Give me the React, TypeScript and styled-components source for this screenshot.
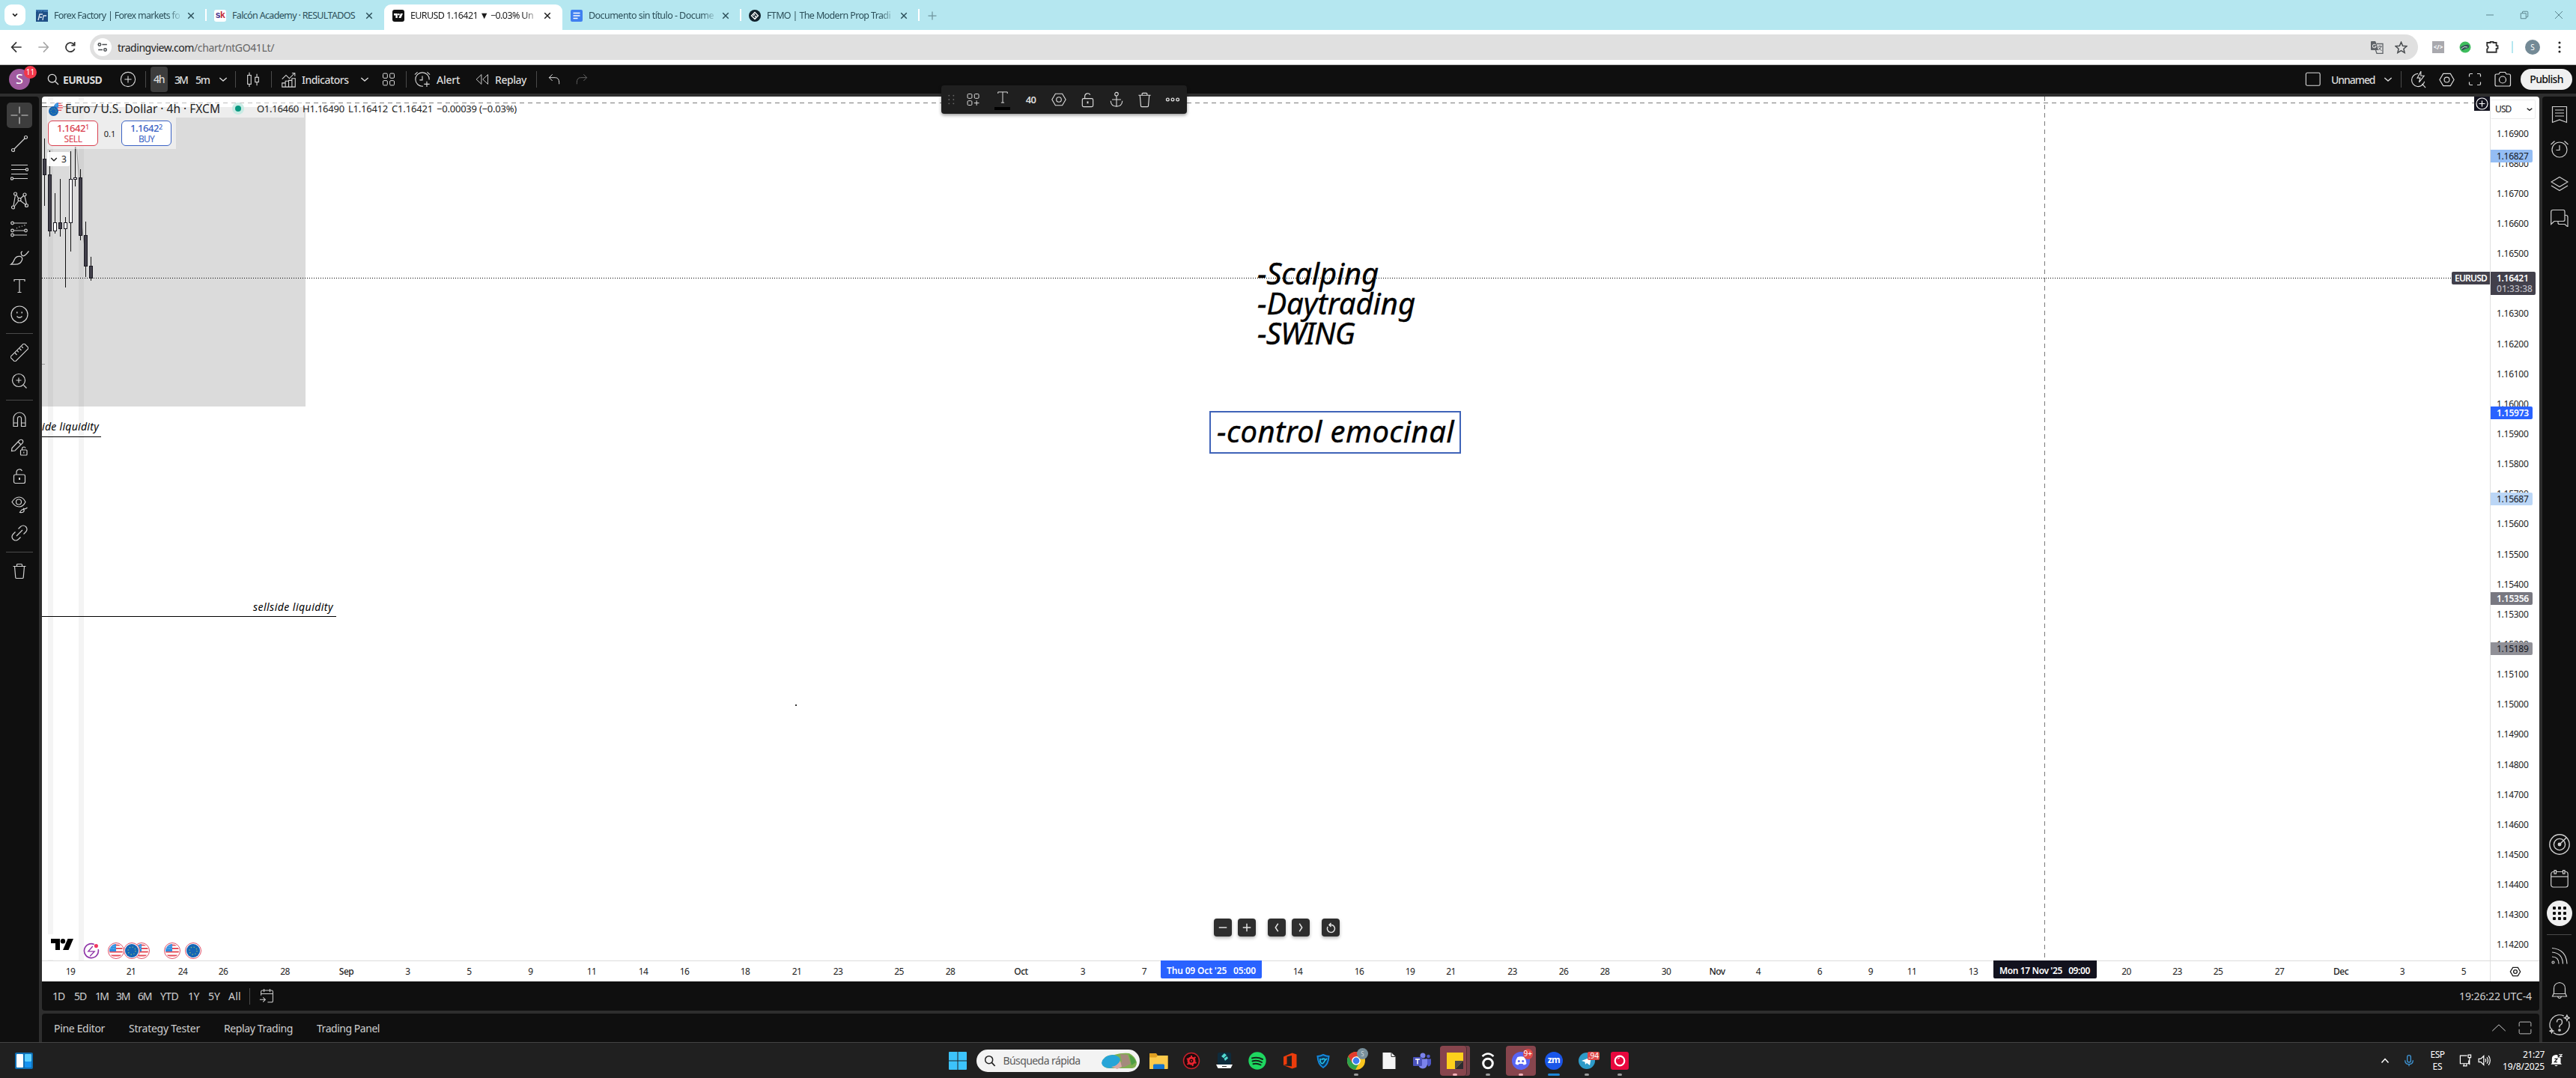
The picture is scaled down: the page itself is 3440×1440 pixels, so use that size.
import React, { useLayoutEffect, useRef } from "react";
import styled, { createGlobalStyle } from "styled-components";

const GlobalStyle = createGlobalStyle`
  * {
    box-sizing: border-box;
  }

  body {
    margin: 0;
    background: #2e2e2e;
    font-family: "Noto Sans", "Open Sans", sans-serif;
    overflow: hidden;
  }

  svg {
    display: block;
    flex: none;
  }
`;

/* ---------- helpers ---------- */

type FitProps = { width: number; children: string };

// spreads the letters of a label so that it takes exactly the given width
const Fit: React.FC<FitProps> = ({ width, children }) => {
  const ref = useRef<HTMLSpanElement>(null);

  useLayoutEffect(() => {
    const el = ref.current;
    if (!el) return;
    el.style.letterSpacing = "0";
    const natural = el.getBoundingClientRect().width;
    el.style.letterSpacing = `${(width - natural) / children.length}px`;
  }, [width, children]);

  return <FitText ref={ref}>{children}</FitText>;
};

type IconProps = {
  size?: number;
  stroke?: number;
  fill?: string;
  children: React.ReactNode;
};

const Icon: React.FC<IconProps> = ({ size = 24, stroke = 1.2, fill = "none", children }) => (
  <svg
    width={size}
    height={size}
    viewBox="0 0 24 24"
    fill={fill}
    stroke={stroke ? "currentColor" : "none"}
    strokeWidth={stroke}
  >
    {children}
  </svg>
);

/* ---------- icons ---------- */

const Chevron = () => (
  <Icon size={16}>
    <path d="M5 9l7 6 7-6" strokeWidth="2" />
  </Icon>
);

const HexIcon = ({ size = 24, stroke = 1.2 }: { size?: number; stroke?: number }) => (
  <Icon size={size} stroke={stroke}>
    <path d="M7 3.500h10l5 8.500-5 8.500H7L2 12z" />
    <circle cx="12" cy="12" r="3.600" />
  </Icon>
);

const LockIcon = ({ size = 24 }: { size?: number }) => (
  <Icon size={size}>
    <rect x="4.500" y="10" width="15" height="11.500" rx="2" />
    <path d="M8 10V6.500a4 4 0 0 1 7.500-1.500" />
    <path d="M12 14v3" strokeWidth="2" />
  </Icon>
);

const TrashIcon = ({ size = 24 }: { size?: number }) => (
  <Icon size={size}>
    <path d="M3.500 5.500h17M8.500 5.500V3.500q0-1 1-1h5q1 0 1 1v2M5.500 5.500l1.300 15q.1 1 1.200 1h8q1.100 0 1.200-1l1.300-15" />
  </Icon>
);

const FullscreenIcon = () => (
  <Icon>
    <path d="M4.500 8.500V6q0-1.500 1.500-1.500h3M15 4.500h3q1.500 0 1.500 1.500v2.500M19.500 15.500V18q0 1.500-1.500 1.500h-3M9 19.500H6q-1.500 0-1.500-1.500v-2.500" />
  </Icon>
);

const CrossIcon = () => (
  <Icon>
    <path d="M12 0.500v9M12 14.500v9M0.500 12h9M14.500 12h9" />
  </Icon>
);

const TrendIcon = () => (
  <Icon>
    <circle cx="3.500" cy="20.500" r="2" />
    <circle cx="20.500" cy="3.500" r="2" />
    <path d="M5 19L19 5" />
  </Icon>
);

const FibIcon = () => (
  <Icon>
    <path d="M1 2.500h22M1 8.500h19.500M4 20.500h19M1 14.500h22" />
    <circle cx="22" cy="8.500" r="1.700" />
    <circle cx="2" cy="20.500" r="1.700" />
  </Icon>
);

const PatternIcon = () => (
  <Icon>
    <path d="M4 19L6.500 4.500M8 4.500l3 5M5 20l6-8M13 9.500l4.500-4M19 6l2.500 11M13 12l8 6" />
    <circle cx="6.500" cy="3" r="2" />
    <circle cx="19" cy="4" r="2" />
    <circle cx="12" cy="10.500" r="2" />
    <circle cx="3.500" cy="21" r="2" />
    <circle cx="21.500" cy="18.500" r="2" />
  </Icon>
);

const ForecastIcon = () => (
  <Icon>
    <path d="M4 4h18M4 14h15M4 20h18" />
    <circle cx="2.500" cy="4" r="1.800" />
    <circle cx="2.500" cy="14" r="1.800" />
    <circle cx="20.500" cy="14" r="1.800" />
    <circle cx="2.500" cy="20" r="1.800" />
    <path d="M8 11l4-2 4-1 5-2" strokeDasharray="1.200 2.500" />
  </Icon>
);

const BrushIcon = () => (
  <Icon size={26}>
    <path d="M1.500 20.500q3-2 4-5.500 2-5 7-4.500 4 1 2.500 5-2 5-8 5zM14 5.500q0 4.500 3 4.500 3-1 6.500-6M14 5.500l1.500-1" />
  </Icon>
);

const TextIcon = () => (
  <Icon>
    <path d="M5 6V3.500h14V6M12 3.500v17M9.500 20.500h5" />
  </Icon>
);

const SmileIcon = () => (
  <Icon>
    <circle cx="12" cy="12" r="11" />
    <path d="M8 9.500h1.500M14.500 9.500H16" strokeWidth="2" />
    <path d="M8.500 14.500q3.500 3.500 7 0" />
  </Icon>
);

const RulerIcon = () => (
  <Icon>
    <rect x="-1" y="7.500" width="26" height="9" rx="1.500" transform="rotate(-45 12 12)" />
    <path d="M6.500 11l2.500 2.500M9.500 8l1.800 1.800M12.500 5l2.500 2.500M15.500 2.500l1.800 1.800" transform="translate(-.5 1.500)" />
  </Icon>
);

const ZoomInIcon = () => (
  <Icon>
    <circle cx="11" cy="11" r="8.500" />
    <path d="M17.500 17.500l4 4M11 7.500v7M7.500 11h7" />
  </Icon>
);

const MagnetIcon = () => (
  <Icon>
    <path d="M4 21.500V11a8 8 0 0 1 16 0v10.500h-5.500V11a2.500 2.500 0 0 0-5 0v10.500zM4 17h5.500M14.500 17H20" />
  </Icon>
);

const PencilLockIcon = () => (
  <Icon>
    <path d="M1.500 16.500l.5-4L12 2q2.500-1.500 4 0t0 4L6 16zM10 4l4 4" />
    <rect x="13.500" y="15" width="8.500" height="7" rx="1" />
    <path d="M15.500 15v-2q.5-2 2.500-2 1.500 0 2 1.500M17.800 17.500v2" />
  </Icon>
);

const EyeIcon = () => (
  <Icon>
    <path d="M2 8.500Q6 2 11.500 2T20 8.500Q17 15 11.500 15T2 8.500z" />
    <circle cx="11" cy="8.500" r="3.500" />
    <path d="M12.500 22.500q2-4 4.500-4 2.500 1 0 3.500-1.500 1-4.500.5zM17 17q2 2 5.500-1" />
  </Icon>
);

const LinkIcon = () => (
  <Icon>
    <path d="M8 16l8-8M10.500 6.500l3-3q3.500-3 7 0 3 3.500 0 7l-3 3M6.500 10.500l-3 3q-3 3.500 0 7 3.500 3 7 0l3-3" />
  </Icon>
);

const ListIcon = () => (
  <Icon>
    <path d="M2.500 1.500h19v21l-9.500-3.500-9.500 3.500zM6 6h12M6 10h12M6 14h12" />
  </Icon>
);

const AlarmIcon = () => (
  <Icon>
    <circle cx="12" cy="13" r="10" />
    <path d="M12 7v6.500H7.500M0.500 6l5-4.500M23.500 6l-5-4.500" />
  </Icon>
);

const LayersIcon = () => (
  <Icon>
    <path d="M12 3.500l11 6.500-11 6.500L1 10zM1 15l11 6.500L23 15" />
  </Icon>
);

const ChatIcon = () => (
  <Icon>
    <path d="M.7 20.500V4q0-2.500 2.500-2.500h14Q19 1.500 19 4v10.500q0 2-2 2H5z" />
    <path d="M19 8.500h1.500q2.500 0 2.500 2.500v13l-4-3.500h-7q-2 0-2-2v-2" />
  </Icon>
);

const RadarIcon = () => (
  <Icon size={28}>
    <circle cx="12" cy="12" r="11.300" />
    <circle cx="12" cy="12" r="6.500" />
    <circle cx="12" cy="12" r="1.500" fill="currentColor" />
    <path d="M12 12l8-8" />
  </Icon>
);

const CalendarIcon = () => (
  <Icon>
    <rect x="0.700" y="2.500" width="22.500" height="20.500" rx="3" />
    <path d="M1 9h22" />
    <rect x="5" y="0.600" width="2.500" height="4.500" fill="#0f0f0f" />
    <rect x="16.500" y="0.600" width="2.500" height="4.500" fill="#0f0f0f" />
  </Icon>
);

const RssIcon = () => (
  <Icon>
    <circle cx="3.500" cy="20.500" r="1.500" />
    <path d="M2 13q9 0 9 9.500M2 7q14 1 14.500 15.500M2 1.500Q21 3 22 22.500" />
  </Icon>
);

const BellIcon = () => (
  <Icon>
    <path d="M4.500 16.500V9.500q0-7 7.500-8 7.500 1 7.500 8v7M4 16.500h16l1.500 3.500h-19zM9.500 20.500q2.500 4 5 0" />
  </Icon>
);

const HelpIcon = () => (
  <Icon size={28}>
    <path d="M17 1.800A11.300 11.300 0 0 0 1.800 16.500M5 21A11.300 11.300 0 0 0 22.500 8" />
    <path d="M9 9q0-3.500 3-3.500T15 9q0 2-1.800 3t-1.200 3" />
    <circle cx="12" cy="18" r="1" />
    <path d="M20.500 1l.9 2.100L23.500 4l-2.100.9-.9 2.100-.9-2.100L17.500 4l2.100-.9zM3 17l.6 1.400L5 19l-1.400.6L3 21l-.6-1.400L1 19l1.400-.6z" />
  </Icon>
);

const Flag = ({ eu, size = 18 }: { eu?: boolean; size?: number }) => (
  <svg width={size} height={size} viewBox="0 0 18 18">
    <clipPath id="round">
      <circle cx="9" cy="9" r="9" />
    </clipPath>
    <g clipPath="url(#round)">
      {eu ? (
        <>
          <rect width="18" height="18" fill="#1565b5" />
          <circle cx="9" cy="9" r="5" fill="none" stroke="#8fc06a" strokeWidth="1.300" strokeDasharray="1.300 2.630" />
        </>
      ) : (
        <>
          <rect width="18" height="18" fill="#fff" />
          <path d="M0 1.500h18M0 6h18M0 10.500h18M0 15.500h18" stroke="#e5505c" strokeWidth="2.200" />
          <rect width="9" height="10" fill="#2c8de0" />
          <path d="M1 3h8M1 6h8" stroke="#b9dcf8" strokeWidth=".8" strokeDasharray="1 1" />
        </>
      )}
    </g>
  </svg>
);

const TvLogo = ({ size = 30, color = "#000" }: { size?: number; color?: string }) => (
  <svg width={size} height={size / 2} viewBox="0 0 30 15" fill={color}>
    <path d="M0 0h12v15H6V6H0z" />
    <circle cx="16" cy="3.200" r="3.200" />
    <path d="M22.500 0H30l-6.500 15H16z" />
  </svg>
);

/* ---------- data ---------- */

type TabInfo = { icon: string; title: string; active?: boolean; width: number };

const tabs: TabInfo[] = [
  { icon: "ff", title: "Forex Factory | Forex markets fo", width: 168 },
  { icon: "sk", title: "Falcón Academy · RESULTADOS", width: 164 },
  { icon: "tv", title: "EURUSD 1.16421 ▼ −0.03% Un", width: 164, active: true },
  { icon: "doc", title: "Documento sin título - Docume", width: 167 },
  { icon: "ftmo", title: "FTMO | The Modern Prop Tradi", width: 165 },
];

const prices = Array.from({ length: 28 }, (_, i) => (1.169 - i * 0.001).toFixed(5));

const ticks: [string, number][] = [
  ["19", 94], ["21", 175], ["24", 244], ["26", 298], ["28", 380.5], ["Sep", 462.5],
  ["3", 544.5], ["5", 626.5], ["9", 708.5], ["11", 790], ["14", 859], ["16", 914],
  ["18", 995], ["21", 1064], ["23", 1119], ["25", 1200.5], ["28", 1269], ["Oct", 1363.5],
  ["3", 1446], ["7", 1528], ["14", 1733], ["16", 1815], ["19", 1883], ["21", 1937.5],
  ["23", 2019.5], ["26", 2088], ["28", 2143], ["30", 2225], ["Nov", 2293], ["4", 2348],
  ["6", 2430], ["9", 2498], ["11", 2553], ["13", 2635], ["20", 2839.5], ["23", 2907.5],
  ["25", 2962], ["27", 3044], ["Dec", 3126], ["3", 3208], ["5", 3290],
];

// x, high, low, body top, body bottom, rising
const candles: [number, number, number, number, number, boolean][] = [
  [59.5, 185, 275, 212, 234, false],
  [66.5, 201, 316, 233, 309, false],
  [73.5, 258, 312, 297, 309, true],
  [80.5, 239, 316, 297, 306, false],
  [87.5, 290, 384, 297, 306, true],
  [94.5, 202, 336, 239, 298, true],
  [100.5, 196, 249, 237, 240, true],
  [107.5, 226, 321, 237, 315, false],
  [114.5, 296, 370, 314, 356, false],
  [121.5, 343, 375, 355, 372, false],
];

const ranges: [string, number, number][] = [
  ["1D", 16, 29], ["5D", 16, 28], ["1M", 17, 28], ["3M", 18, 29], ["6M", 18, 30],
  ["YTD", 24, 37], ["1Y", 15, 27], ["5Y", 16, 27], ["All", 17, 17],
];

/* ---------- browser ---------- */

const Favicon = ({ kind }: { kind: string }) => {
  switch (kind) {
    case "ff":
      return (
        <svg width="16" height="16" viewBox="0 0 16 16">
          <rect width="16" height="15" y="1" fill="#1f4f86" />
          <path d="M0 3l3-2v3l3-3v3l4-3v2h6V0H0z" fill="#3a74ad" />
          <path d="M3 14l2-8h4M5 10h3M9 14l1-6h4" stroke="#dfe9f2" strokeWidth="1.300" fill="none" />
        </svg>
      );
    case "sk":
      return <SkIcon><i>s</i>k</SkIcon>;
    case "tv":
      return (
        <TvIcon>
          <TvLogo size={12} color="#fff" />
        </TvIcon>
      );
    case "doc":
      return (
        <svg width="16" height="16" viewBox="0 0 16 16">
          <rect width="16" height="16" rx="2" fill="#3f7ff0" />
          <path d="M3.500 4.500h9M3.500 8h9M3.500 11.500h6" stroke="#fff" strokeWidth="1.600" />
        </svg>
      );
    default:
      return (
        <svg width="16" height="16" viewBox="0 0 16 16">
          <circle cx="8" cy="8" r="8" fill="#10202b" />
          <path d="M8 3.500L12.500 8 8 12.500 3.500 8zM6 8l2-2M8 10l2-2" stroke="#fff" strokeWidth="1.300" fill="none" />
        </svg>
      );
  }
};

const Browser = () => (
  <>
    <TabStrip>
      <TabSearch>
        <Icon size={10}>
          <path d="M5 8l7 7 7-7" strokeWidth="4" />
        </Icon>
      </TabSearch>
      {tabs.map((tab) => (
        <Tab key={tab.icon} $active={tab.active} $divided={tab.icon !== "sk" && !tab.active}>
          <Favicon kind={tab.icon} />
          <TabTitle $fade={tab.icon !== "sk"}>
            <Fit width={tab.width}>{tab.title}</Fit>
          </TabTitle>
          <Icon size={10}>
            <path d="M3 3l18 18M21 3L3 21" strokeWidth="3.500" />
          </Icon>
        </Tab>
      ))}
      <NewTab>
        <Icon size={12}>
          <path d="M12 1v22M1 12h22" strokeWidth="2.500" />
        </Icon>
      </NewTab>
      <WindowButtons>
        <Icon size={12}><path d="M2 12h20" strokeWidth="2" /></Icon>
        <Icon size={12}>
          <path d="M2.500 7.500h14v14h-14zM7 7V4q0-1.500 1.500-1.500h11Q21.500 2.500 21.500 4.500V16q0 1.500-1.500 1.500h-3" strokeWidth="2" />
        </Icon>
        <Icon size={12}><path d="M2 2l20 20M22 2L2 22" strokeWidth="2" /></Icon>
      </WindowButtons>
    </TabStrip>
    <NavBar>
      <NavIcon>
        <Icon size={16}><path d="M22 12H3M12 2L2.500 12l9.500 10" strokeWidth="2.600" /></Icon>
      </NavIcon>
      <NavIcon $dim>
        <Icon size={16}><path d="M2 12h19M12 2l9.500 10L12 22" strokeWidth="2.400" /></Icon>
      </NavIcon>
      <NavIcon>
        <Icon size={16}><path d="M20.500 15A9 9 0 1 1 18 5.500l2.500 2.500M20.500 1.500V8.500H14" strokeWidth="2.600" /></Icon>
      </NavIcon>
      <AddressBar>
        <SiteInfo>
          <Icon size={14}>
            <circle cx="5" cy="6" r="3" strokeWidth="2.500" />
            <path d="M11 6h11M2 18h10" strokeWidth="2.500" />
            <circle cx="18" cy="18" r="3" strokeWidth="2.500" />
          </Icon>
        </SiteInfo>
        <Url>
          <Fit width={102}>tradingview.com</Fit>
          <span>
            <Fit width={107}>/chart/ntGO41Lt/</Fit>
          </span>
        </Url>
        <svg width="17" height="17" viewBox="0 0 17 17">
          <path d="M0 1q0-1 1-1h5l1.500 3L10 12H1q-1 0-1-1z" fill="#5f6368" />
          <path d="M8 3.500h8v12.800H8L6.500 12" fill="none" stroke="#5f6368" strokeWidth="1.300" />
          <path d="M6.500 5A2.300 2.300 0 1 0 7 7H5" fill="none" stroke="#e0e0e0" strokeWidth="1.100" />
          <path d="M9.500 7H15M12 5.500V7M13.800 7q-1 3-3.500 5M10.500 8.500l4 4.500" fill="none" stroke="#5f6368" strokeWidth="1" />
        </svg>
        <Icon size={17}>
          <path d="M12 2l3 6.800 7.400.7-5.600 4.900 1.700 7.300L12 17.800l-6.500 3.900 1.700-7.300-5.600-4.900L9 8.800z" strokeWidth="2.200" />
        </Icon>
      </AddressBar>
      <Extensions>
        <Cell $w={36}><CodeExt>&lt;/&gt;</CodeExt></Cell>
        <Cell $w={36}>
          <svg width="16" height="16" viewBox="0 0 16 16">
            <circle cx="8" cy="8" r="7.500" fill="#3dbd5d" />
            <path d="M1.500 8l5-2.500 5-1 2 1.500-1 3-5 1.500-3 2z" fill="#35505a" />
            <path d="M3 10l4-2.500 4 .5" stroke="#cfe9d5" fill="none" />
          </svg>
        </Cell>
        <Cell $w={36}>
          <Icon size={18}>
            <path d="M3 4h6V2.500h5V4h5.500v5.500H22v5h-2.500V21H3v-5.500q4-3.500 0-6z" strokeWidth="2.500" />
          </Icon>
        </Cell>
        <Cell $w={18}><ExtDivider /></Cell>
        <Cell $w={36}><Profile>S</Profile></Cell>
        <Cell $w={35}>
          <Icon size={16} fill="#222" stroke={0}>
            <circle cx="12" cy="3" r="2.300" />
            <circle cx="12" cy="12" r="2.300" />
            <circle cx="12" cy="21" r="2.300" />
          </Icon>
        </Cell>
      </Extensions>
    </NavBar>
  </>
);

/* ---------- trading view ---------- */

const Header = () => (
  <TopBar>
    <Cell $w={52}>
      <Avatar>
        S<Badge>11</Badge>
      </Avatar>
    </Cell>
    <Cell $w={38}>
      <Icon size={16}>
        <circle cx="10" cy="10" r="8" strokeWidth="2" />
        <path d="M16 16l6.500 6.500" strokeWidth="2" />
      </Icon>
    </Cell>
    <Label $w={64} $shift={-6} $bold><Fit width={52}>EURUSD</Fit></Label>
    <Cell $w={33}>
      <Icon size={22}>
        <circle cx="12" cy="12" r="10.500" />
        <path d="M12 7v10M7 12h10" />
      </Icon>
    </Cell>
    <Cell $w={14}><Divider /></Cell>
    <Interval $active><Fit width={14.5}>4h</Fit></Interval>
    <Label $w={28} $shift={7}><Fit width={17}>3M</Fit></Label>
    <Label $w={34} $shift={7}><Fit width={19}>5m</Fit></Label>
    <Cell $w={20}><Chevron /></Cell>
    <Cell $w={12}><Divider /></Cell>
    <Cell $w={36}>
      <Icon size={22}>
        <rect x="4" y="6" width="5" height="13" />
        <path d="M6.500 2v4M6.500 19v4M17.500 4v5M17.500 16v5" />
        <rect x="15" y="9" width="5" height="7" />
      </Icon>
    </Cell>
    <Cell $w={12}><Divider /></Cell>
    <Cell $w={35}>
      <Icon size={21}>
        <path d="M2 23v-6h5v6zM7 17v-3h5v9H7M12 14v-1h5v10h-5M17 13v-3h5v13h-5M2 11l6-6 5 5 8-8M17 2h4.500v4.500" />
      </Icon>
    </Cell>
    <Label $w={74}><Fit width={62.5}>Indicators</Fit></Label>
    <Cell $w={20}><Chevron /></Cell>
    <Cell $w={43}>
      <Icon size={20}>
        <rect x="3" y="2.500" width="7" height="7.500" rx="1.500" />
        <rect x="14" y="2.500" width="7" height="7.500" rx="1.500" />
        <rect x="3" y="14" width="7" height="7.500" rx="1.500" />
        <rect x="14" y="14" width="7" height="7.500" rx="1.500" />
      </Icon>
    </Cell>
    <Cell $w={4}><Divider /></Cell>
    <Cell $w={39}>
      <Icon size={22}>
        <path d="M22 12.500A10 10 0 1 0 13 22M12 7v6H8M1 5l4-3.500M23 5l-4-3.500M18.500 15v8M14.500 19h8" />
      </Icon>
    </Cell>
    <Label $w={49}><Fit width={31}>Alert</Fit></Label>
    <Cell $w={24}>
      <Icon size={18}>
        <path d="M10.500 3.500v17L1.500 12zM22 3.500v17L13 12z" />
      </Icon>
    </Cell>
    <Label $w={55} $shift={5}><Fit width={42}>Replay</Fit></Label>
    <Cell $w={10}><Divider /></Cell>
    <Cell $w={37}>
      <Icon size={16}><path d="M8.500 2L2 8.500 8.500 15M2 8.500h12q8 0 8 10v3" strokeWidth="1.500" /></Icon>
    </Cell>
    <Cell $w={37} $dim>
      <Icon size={16}><path d="M15.500 2L22 8.500 15.500 15M22 8.500H10q-8 0-8 10v3" strokeWidth="1.500" /></Icon>
    </Cell>
    <Spacer />
    <Cell $w={43}>
      <Icon size={22}><rect x="1.500" y="2.500" width="20.500" height="18.500" rx="2" /></Icon>
    </Cell>
    <Label $w={72} $shift={3}><Fit width={58.5}>Unnamed</Fit></Label>
    <Cell $w={14}><Chevron /></Cell>
    <Cell $w={20}><Divider /></Cell>
    <Cell $w={26}>
      <Icon size={23}>
        <path d="M11.500 3.500a9 9 0 1 0 9 11M17 17.500l5 5.500M15.500 0.500l-5 9h4l-1.500 6 7-9h-4.500z" />
      </Icon>
    </Cell>
    <Cell $w={50}><HexIcon size={23} /></Cell>
    <Cell $w={26}><FullscreenIcon /></Cell>
    <Cell $w={48}>
      <Icon>
        <path d="M2 7q0-2 2-2h3l1.500-2.500h7L17 5h3.500q2 0 2 2v12q0 2-2 2H4q-2 0-2-2z" />
        <circle cx="12" cy="12.500" r="4.500" />
      </Icon>
    </Cell>
    <Publish><Fit width={44.5}>Publish</Fit></Publish>
  </TopBar>
);

const DrawingBar = () => (
  <SideBar>
    <Tool $active><CrossIcon /></Tool>
    <Tool><TrendIcon /></Tool>
    <Tool><FibIcon /></Tool>
    <Tool><PatternIcon /></Tool>
    <Tool><ForecastIcon /></Tool>
    <Tool><BrushIcon /></Tool>
    <Tool><TextIcon /></Tool>
    <Tool><SmileIcon /></Tool>
    <ToolLine />
    <Tool><RulerIcon /></Tool>
    <Tool><ZoomInIcon /></Tool>
    <ToolLine />
    <Tool><MagnetIcon /></Tool>
    <Tool><PencilLockIcon /></Tool>
    <Tool><LockIcon /></Tool>
    <Tool><EyeIcon /></Tool>
    <Tool><LinkIcon /></Tool>
    <ToolLine />
    <Tool><TrashIcon /></Tool>
  </SideBar>
);

const WidgetBar = () => (
  <RightBar>
    <Widget><ListIcon /></Widget>
    <Widget><AlarmIcon /></Widget>
    <Widget><LayersIcon /></Widget>
    <Widget><ChatIcon /></Widget>
    <Spacer />
    <Widget><RadarIcon /></Widget>
    <Widget><CalendarIcon /></Widget>
    <Widget>
      <AppsButton>
        {Array.from({ length: 9 }, (_, i) => <i key={i} />)}
      </AppsButton>
    </Widget>
    <WidgetLine />
    <Widget><RssIcon /></Widget>
    <Widget><BellIcon /></Widget>
    <Widget><HelpIcon /></Widget>
  </RightBar>
);

const Plot = () => (
  <PlotSvg viewBox="56 129 3269 1154">
    <rect x="56" y="143" width="352" height="400" fill="#dbdbdb" />
    <rect x="64" y="129" width="7" height="1154" fill="#777" opacity=".08" />
    <rect x="105" y="129" width="7" height="1154" fill="#777" opacity=".08" />
    <path d="M56 142.500h90" stroke="#333" />
    <path d="M102 196l4 42M109 300l6 45" stroke="#999" fill="none" />
    <path d="M56 486.500h4" stroke="#999" />
    {candles.map(([x, high, low, top, bottom, up]) => (
      <g key={x}>
        <path d={`M${x} ${high}V${low}`} stroke="#111" />
        <rect
          x={x - 2}
          y={top + 0.5}
          width="4"
          height={bottom - top - 1}
          fill={up ? "#fff" : "#42404b"}
          stroke="#1b1a22"
        />
      </g>
    ))}
    <path d="M56 371.500H3274" stroke="#000" strokeDasharray="1 2" />
    <path d="M56 583.500h79M56 823.500h393" stroke="#000" />
    <path d="M56 137.500H3304" stroke="#7a7a7a" strokeDasharray="6 5" />
    <path d="M2730.500 129V1283" stroke="#7a7a7a" strokeDasharray="6 5" />
    <rect x="1062" y="941" width="2" height="2" fill="#333" />
  </PlotSvg>
);

const Legend = () => (
  <LegendBox>
    <LegendRow>
      <Pair>
        <Flag size={12} />
        <Flag size={13} eu />
      </Pair>
      <SymbolName><Fit width={207}>Euro / U.S. Dollar · 4h · FXCM</Fit></SymbolName>
      <StatusDot />
      <Ohlc>
        <Fit width={56}>O1.16460</Fit>
        <Fit width={56}>H1.16490</Fit>
        <Fit width={53}>L1.16412</Fit>
        <Fit width={55}>C1.16421</Fit>
        <Fit width={107}>−0.00039 (−0.03%)</Fit>
      </Ohlc>
    </LegendRow>
    <OrderRow>
      <OrderButton $color="#d9404f">
        <b><Fit width={38}>1.1642</Fit><sup>1</sup></b>
        <Fit width={24}>SELL</Fit>
      </OrderButton>
      <Lot>0.1</Lot>
      <OrderButton $color="#3a62c4">
        <b><Fit width={38}>1.1642</Fit><sup>2</sup></b>
        <Fit width={21}>BUY</Fit>
      </OrderButton>
    </OrderRow>
    <Collapse>
      <Icon size={10}><path d="M3 7l9 9 9-9" strokeWidth="3.500" /></Icon>
      3
    </Collapse>
  </LegendBox>
);

const TextToolbar = () => (
  <FloatBar>
    <Cell $w={25}>
      <Icon size={16} fill="#666" stroke={0}>
        {[4, 12, 20].map((y) => (
          <g key={y}>
            <circle cx="8" cy={y} r="1.400" />
            <circle cx="17" cy={y} r="1.400" />
          </g>
        ))}
      </Icon>
    </Cell>
    <Cell $w={36}>
      <Icon size={20}>
        <rect x="2.500" y="3" width="7" height="7" rx="1.500" />
        <rect x="13.500" y="3" width="7" height="7" rx="1.500" />
        <rect x="2.500" y="14" width="7" height="7" rx="1.500" />
        <path d="M17 13.500v8M13 17.500h8" />
      </Icon>
    </Cell>
    <ColorCell>
      <Icon size={20}><path d="M4.500 6V3.500h15V6M12 3.500v17M9.500 20.500h5" /></Icon>
      <Swatch />
    </ColorCell>
    <Cell $w={35}><SizeValue>40</SizeValue></Cell>
    <Cell $w={39}><HexIcon size={22} /></Cell>
    <Cell $w={39}><LockIcon size={23} /></Cell>
    <Cell $w={38}>
      <Icon size={22}>
        <circle cx="12" cy="4" r="2.500" />
        <path d="M12 6.500v15M5.500 12h13M3.500 14q.5 8 8.500 8t8.500-8" />
      </Icon>
    </Cell>
    <Cell $w={37}><TrashIcon size={23} /></Cell>
    <Cell $w={38}>
      <Icon size={20} stroke={1.6}>
        <circle cx="4" cy="12" r="2.200" />
        <circle cx="12" cy="12" r="2.200" />
        <circle cx="20" cy="12" r="2.200" />
      </Icon>
    </Cell>
  </FloatBar>
);

const Events = () => (
  <>
    <LogoMark><TvLogo /></LogoMark>
    <Bolt>
      <Icon size={22}>
        <path d="M16 2.700A10.300 10.300 0 1 0 22 10" strokeWidth="1.800" />
        <path d="M14 5.500l-6.500 7.500h9L10 20" strokeWidth="1.500" />
        <circle cx="19" cy="5" r="2.800" fill="#f23663" stroke="none" />
      </Icon>
    </Bolt>
    <Event $x={154.5}><Flag /></Event>
    <Event $x={189}><Flag /></Event>
    <Event $x={175.5}><Flag eu /></Event>
    <Event $x={229.5}><Flag /></Event>
    <Event $x={257.5}><Flag eu /></Event>
  </>
);

const ChartPane = () => (
  <Pane>
    <Plot />
    <Legend />
    <Note $x={1679} $y={345}>
      <Fit width={162}>-Scalping</Fit>
      <Fit width={211}>-Daytrading</Fit>
      <Fit width={130}>-SWING</Fit>
    </Note>
    <SelectedNote><Fit width={317}>-control emocinal</Fit></SelectedNote>
    <LineNote $right={132} $y={560}><Fit width={76}>ide liquidity</Fit></LineNote>
    <LineNote $right={445} $y={801}><Fit width={107}>sellside liquidity</Fit></LineNote>
    <Events />
    <ZoomButtons>
      <ZoomButton><Icon size={14}><path d="M3 12h18" strokeWidth="2.500" /></Icon></ZoomButton>
      <ZoomButton><Icon size={14}><path d="M3 12h18M12 3v18" strokeWidth="2.500" /></Icon></ZoomButton>
      <ZoomButton $gap><Icon size={14}><path d="M15 3l-6 9 6 9" strokeWidth="2.500" /></Icon></ZoomButton>
      <ZoomButton><Icon size={14}><path d="M9 3l6 9-6 9" strokeWidth="2.500" /></Icon></ZoomButton>
      <ZoomButton $gap>
        <Icon size={15}><path d="M5 9.500a8 8 0 1 0 7-4H8.500M12 1.500l-4 4 4 4" strokeWidth="2.300" /></Icon>
      </ZoomButton>
    </ZoomButtons>
    <PlusBox>
      <Icon size={19}>
        <circle cx="12" cy="12" r="9.500" strokeWidth="1.500" />
        <path d="M12 7v10M7 12h10" strokeWidth="1.500" />
      </Icon>
    </PlusBox>
    <SymbolTag><Fit width={43}>EURUSD</Fit></SymbolTag>
  </Pane>
);

const PriceAxis = () => (
  <Axis>
    <Currency>
      <Fit width={21.5}>USD</Fit>
      <Icon size={8}><path d="M2 8l10 8 10-8" strokeWidth="4" /></Icon>
    </Currency>
    {prices.map((price) => (
      <Price key={price}><Fit width={42.5}>{price}</Fit></Price>
    ))}
    <PriceTag $y={200} $bg="#94bdf4"><Fit width={42.5}>1.16827</Fit></PriceTag>
    <PriceTag $y={363} $bg="#42404b" $w={60} $h={31} $light>
      <Fit width={42.5}>1.16421</Fit>
      <Countdown><Fit width={48}>01:33:38</Fit></Countdown>
    </PriceTag>
    <PriceTag $y={543} $bg="#2962ff" $light><Fit width={43}>1.15973</Fit></PriceTag>
    <PriceTag $y={658} $bg="#bbd6f6"><Fit width={42.5}>1.15687</Fit></PriceTag>
    <PriceTag $y={791} $bg="#787881" $light><Fit width={43}>1.15356</Fit></PriceTag>
    <PriceTag $y={858} $bg="#909097"><Fit width={42.5}>1.15189</Fit></PriceTag>
  </Axis>
);

const TimeAxis = () => (
  <TimeRow>
    <TimeTicks>
      {ticks.map(([text, x], i) => (
        <Tick key={x} $gap={x - (i ? ticks[i - 1][1] : 56)} $bold={text.length > 2}>
          <span>{text}</span>
        </Tick>
      ))}
      <TimeTag $x={1550} $w={135} $bg="#2962ff">
        <Fit width={119}>{"Thu 09 Oct '25   05:00"}</Fit>
      </TimeTag>
      <TimeTag $x={2662} $w={138} $bg="#12121e">
        <Fit width={121}>{"Mon 17 Nov '25   09:00"}</Fit>
      </TimeTag>
    </TimeTicks>
    <AxisSettings><HexIcon size={16} stroke={2} /></AxisSettings>
  </TimeRow>
);

const Footer = () => (
  <>
    <RangeBar>
      {ranges.map(([text, width, step]) => (
        <Range key={text} $w={step}><Fit width={width}>{text}</Fit></Range>
      ))}
      <Cell $w={22}><Divider /></Cell>
      <Cell $w={24}>
        <Icon size={21}>
          <path d="M3 11V5.500q0-2 2-2h14q2 0 2 2V19q0 2.500-2 2.500h-6M3 8.500h18M7.500 1v5M16.500 1v5M1 17.500h8M6 14l3.500 3.500L6 21" />
        </Icon>
      </Cell>
      <Spacer />
      <Fit width={97}>19:26:22 UTC-4</Fit>
    </RangeBar>
    <PanelTabs>
      <Fit width={68}>Pine Editor</Fit>
      <Fit width={95}>Strategy Tester</Fit>
      <Fit width={92}>Replay Trading</Fit>
      <Fit width={84}>Trading Panel</Fit>
      <Spacer />
      <Icon size={20}><path d="M1.500 17L12 7l10.500 10" /></Icon>
      <Icon size={18}>
        <path d="M1.500 8V3.500q0-2 2-2h17q2 0 2 2V8M1.500 16v4.500q0 2 2 2h17q2 0 2-2V16M1.500 8v1.500M22.500 8v1.500M1.500 16v-1.500M22.500 16v-1.500" />
      </Icon>
    </PanelTabs>
  </>
);

/* ---------- taskbar ---------- */

const Taskbar = () => (
  <TaskRow>
    <WidgetsIcon>
      <svg width="24" height="22" viewBox="0 0 24 22">
        <rect width="24" height="22" rx="2" fill="#0f6fb4" />
        <rect x="2" y="2" width="9" height="18" rx="1" fill="#fff" />
        <rect x="13" y="2" width="9" height="10" rx="1" fill="#5fd0ff" />
        <rect x="13" y="12" width="9" height="8" rx="1" fill="#1592f0" />
      </svg>
    </WidgetsIcon>
    <TaskCell>
      <svg width="24" height="24" viewBox="0 0 24 24" fill="#3cc3fb">
        <path d="M1 0h10.500v11.500H0V1q0-1 1-1zM12.500 0H23q1 0 1 1v10.500H12.500zM0 12.500h11.500V24H1q-1 0-1-1zM12.500 12.500H24V23q0 1-1 1H12.500z" />
      </svg>
    </TaskCell>
    <SearchBox>
      <Icon size={16}>
        <circle cx="10" cy="10" r="7.500" strokeWidth="2.300" />
        <path d="M15.500 15.500L22 22.500" strokeWidth="2.600" />
      </Icon>
      <Fit width={103}>Búsqueda rápida</Fit>
      <svg width="50" height="24" viewBox="0 0 50 24">
        <path d="M2 14Q4 4 18 4q10-3 20-2 8 4 10 12 0 7-6 8H12Q2 22 2 14z" fill="#7fb04f" />
        <path d="M1 15Q3 5 16 4q8 1 10 6-2 11-14 12-10-1-11-7z" fill="#27a5d8" />
        <path d="M26 3l10 1 4 12-8 4-10 1 6-8z" fill="#a48a7c" />
        <path d="M14 20q8-1 12-8l2 8-6 3z" fill="#d9a9a4" />
        <path d="M38 4q7 3 9 10l-6 4z" fill="#4f9e45" />
      </svg>
    </SearchBox>
    <TaskCell>
      <svg width="25" height="22" viewBox="0 0 25 22">
        <path d="M0 1h9l2 3h13.500V21H0z" fill="#e0a021" />
        <path d="M0 6.500h9l2-2.500h13.500V22H0z" fill="#fcca4b" />
        <path d="M5 22v-5q0-1.500 1.500-1.500h12Q20 15.500 20 17v5z" fill="#1475cf" />
      </svg>
    </TaskCell>
    <TaskCell>
      <svg width="24" height="24" viewBox="0 0 24 24">
        <circle cx="12" cy="12" r="10.500" fill="#1c0b0c" stroke="#c6202b" strokeWidth="1.500" />
        <circle cx="12" cy="12" r="4" fill="none" stroke="#e8232f" strokeWidth="3" />
        <path d="M12 5v3M6 9l2 1.500M6.500 17l2.500-2M14 19l-1-3M18.500 15l-2.500-1M17.500 7l-2.500 2" stroke="#e8232f" strokeWidth="2" />
        <circle cx="12" cy="12" r="1" fill="#e8232f" />
      </svg>
    </TaskCell>
    <TaskCell>
      <svg width="24" height="24" viewBox="0 0 24 24">
        <rect x="3" y="1" width="18" height="16" rx="2" fill="#0e2b3c" />
        <path d="M12 2l3 2.500-4 4L8 6zM11.500 9l4-3 1.500 2.500-4 3.500z" fill="#52d9cf" />
        <path d="M1 17h22l-2.500 5h-17z" fill="#fff" />
        <path d="M9 19.500h6" stroke="#333" />
      </svg>
    </TaskCell>
    <TaskCell>
      <svg width="24" height="24" viewBox="0 0 24 24">
        <circle cx="12" cy="12" r="11.700" fill="#1ed760" />
        <path d="M5 8.500q7.500-2 14 1.500M5.500 12.500q6.500-2 12.500 1.500M6.500 16.200q5-1.500 10 1.300" stroke="#14251a" strokeWidth="2" fill="none" strokeLinecap="round" />
      </svg>
    </TaskCell>
    <TaskCell>
      <svg width="24" height="24" viewBox="0 0 24 24">
        <path d="M3 6.500L14.500 1.500 20.500 3.500v17l-6 2L3 18l11 1.500V5L7.500 6.500v10L3 18z" fill="#eb3c0c" />
      </svg>
    </TaskCell>
    <TaskCell>
      <svg width="24" height="24" viewBox="0 0 24 24">
        <path d="M12 4q4 2 7.500 2-.5 11-7.500 15Q5 17 4.500 6 8 6 12 4z" fill="#0b3558" stroke="#1488dc" strokeWidth="2" />
        <path d="M8 9v4q3 6 6-1l3-3M9.500 10.500q3-2 5-.5" stroke="#25c7ee" strokeWidth="1.600" fill="none" />
      </svg>
    </TaskCell>
    <TaskCell $running>
      <svg width="24" height="24" viewBox="0 0 24 24">
        <circle cx="12" cy="12" r="12" fill="#f9c51e" />
        <path d="M12 12L1.600 6A12 12 0 0 0 11 24l5-9z" fill="#2ea24c" />
        <path d="M1.600 6A12 12 0 0 1 22.400 6H12L7 15z" fill="#e33b2e" />
        <circle cx="12" cy="12" r="5.800" fill="#fff" />
        <circle cx="12" cy="12" r="4.400" fill="#3b7ded" />
      </svg>
      <ProfileDot>S</ProfileDot>
    </TaskCell>
    <TaskCell>
      <svg width="18" height="22" viewBox="0 0 18 22">
        <path d="M.5 0H12l5.500 5.500V22H.5z" fill="#f5f5f5" />
        <path d="M12 0v5.500h5.500" fill="none" stroke="#333" />
      </svg>
    </TaskCell>
    <TaskCell>
      <svg width="24" height="22" viewBox="0 0 24 22">
        <circle cx="13" cy="4" r="3.500" fill="#7b83eb" />
        <circle cx="20.500" cy="5" r="2.300" fill="#5059c9" />
        <path d="M17 8.500h7V15q-1 3.500-4 3.500z" fill="#5059c9" />
        <path d="M7 8.500h12V16q-1 5-6 5.500-5-.5-6-5.500z" fill="#7b83eb" />
        <rect x="0" y="6" width="12" height="12" rx="1" fill="#4b53bc" />
        <path d="M3 9h6M6 9v6.500" stroke="#fff" strokeWidth="1.500" />
      </svg>
    </TaskCell>
    <TaskCell $running $alert $stacked>
      <svg width="22" height="22" viewBox="0 0 22 22">
        <path d="M0 0h22v12l-10 10H0z" fill="#fdd01c" />
        <path d="M22 11L11 22V11z" fill="#4f4a48" />
        <path d="M22 11L11 22h11z" fill="#2c2c30" />
      </svg>
    </TaskCell>
    <TaskCell $running>
      <svg width="20" height="24" viewBox="0 0 20 24" fill="none" stroke="#fff">
        <circle cx="10" cy="15.500" r="6.300" strokeWidth="3" />
        <path d="M2.500 6Q10-1 17.500 6" strokeWidth="2.500" />
      </svg>
    </TaskCell>
    <TaskCell $running $alert>
      <svg width="24" height="24" viewBox="0 0 24 24">
        <circle cx="12" cy="12" r="12" fill="#5865f2" />
        <path d="M7.500 7q4.500-1.500 9 0 3 4 3 9-2 1.500-4 1.500l-1-1.500h-5l-1 1.500q-2 0-4-1.500 0-5 3-9z" fill="#fff" />
        <circle cx="9.300" cy="12.500" r="1.500" fill="#5865f2" />
        <circle cx="14.700" cy="12.500" r="1.500" fill="#5865f2" />
      </svg>
      <CountDot>9+</CountDot>
    </TaskCell>
    <TaskCell $running $current>
      <ZoomApp>zm</ZoomApp>
    </TaskCell>
    <TaskCell $running>
      <svg width="22" height="22" viewBox="0 0 22 22">
        <circle cx="11" cy="11" r="11" fill="#2d9bc9" />
        <path d="M4 11l13-5-2 11-4-3-2 2-.5-3.500z" fill="#fff" />
      </svg>
      <CountDot $square>.94</CountDot>
    </TaskCell>
    <TaskCell $running>
      <svg width="24" height="24" viewBox="0 0 24 24">
        <rect width="24" height="24" rx="3" fill="#e8083e" />
        <circle cx="12" cy="12" r="6.300" fill="none" stroke="#fff" strokeWidth="2.200" />
        <path d="M9.500 10q0-2 2.500-2" stroke="#fff" fill="none" />
      </svg>
    </TaskCell>
    <Spacer />
    <Tray>
      <Cell $w={32}><Icon size={12}><path d="M3 17l9-10 9 10" strokeWidth="3" /></Icon></Cell>
      <Cell $w={32} $color="#3e94d4">
        <Icon size={16}>
          <rect x="8.500" y="1" width="7" height="14" rx="3.500" strokeWidth="2" />
          <path d="M4 11q0 8 8 8t8-8M12 19v4" strokeWidth="2" />
        </Icon>
      </Cell>
      <TrayText $w={44}><Fit width={19}>ESP</Fit><Fit width={13}>ES</Fit></TrayText>
      <Cell $w={31}>
        <Icon size={17}>
          <path d="M15 3H2v15h16v-6M7 22.500h8M9 18v4M14 18v4M17 1.500h5v5h-5zM19.500 6.500V20" strokeWidth="1.700" />
        </Icon>
      </Cell>
      <Cell $w={18}>
        <Icon size={17}>
          <path d="M1.500 9h4L11 3.500v17L5.500 15h-4zM14 9q2 3 0 6M17 6q4 6 0 12M20 3q6 9 0 18" strokeWidth="1.700" />
        </Icon>
      </Cell>
      <TrayClock><Fit width={29}>21:27</Fit><Fit width={56}>19/8/2025</Fit></TrayClock>
      <Cell $w={30}>
        <Icon size={17} fill="#fff" stroke={0}>
          <path d="M4 17V9q0-7 8-7.500 2 0 3 1v4h5q.5 2 .5 3.500v7l2 2.500H2zM9 21h6q-3 4-6 0z" />
          <path d="M17 1h6l-4 4h4.500" fill="none" stroke="#fff" strokeWidth="1.600" />
          <path d="M9 9h5l-5 6h5" fill="none" stroke="#202020" strokeWidth="1.800" />
        </Icon>
      </Cell>
    </Tray>
  </TaskRow>
);

const App: React.FC = () => {
  return (
    <>
      <GlobalStyle />
      <Screen>
        <Browser />
        <Header />
        <Workspace>
          <DrawingBar />
          <Center>
            <ChartArea>
              <ChartRow>
                <ChartPane />
                <PriceAxis />
              </ChartRow>
              <TimeAxis />
            </ChartArea>
            <Footer />
          </Center>
          <WidgetBar />
          <TextToolbar />
        </Workspace>
        <Taskbar />
      </Screen>
    </>
  );
};

export default App;

/* ---------- styles ---------- */

const FitText = styled.span`
  display: inline-block;
  white-space: pre;
  flex: none;
`;

const Spacer = styled.div`
  flex: 1;
`;

const Screen = styled.div`
  width: 3440px;
  height: 1440px;
  display: flex;
  flex-direction: column;
  overflow: hidden;
`;

const TabStrip = styled.div`
  height: 40px;
  flex: none;
  display: flex;
  align-items: flex-end;
  padding-left: 6px;
  background: #b5e7f0;
`;

const TabSearch = styled.div`
  width: 28px;
  height: 28px;
  margin: 0 3px 6px 0;
  display: flex;
  align-items: center;
  justify-content: center;
  border-radius: 9px;
  background: #fff;
  color: #222;
`;

const Tab = styled.div<{ $active?: boolean; $divided?: boolean }>`
  position: relative;
  width: 238px;
  height: 34px;
  flex: none;
  display: flex;
  align-items: center;
  padding: 0 13px 4px 11px;
  border-radius: 9px 9px 0 0;
  background: ${({ $active }) => ($active ? "#fff" : "transparent")};
  color: ${({ $active }) => ($active ? "#1c1c1c" : "#2c4f59")};

  &::after {
    content: "";
    position: absolute;
    right: -1px;
    top: 6px;
    width: 2px;
    height: 16px;
    background: ${({ $divided }) => ($divided ? "#fff" : "transparent")};
  }
`;

const TabTitle = styled.div<{ $fade: boolean }>`
  width: 168px;
  margin: 0 10px 0 8px;
  overflow: hidden;
  font-size: 12.5px;
  line-height: 20px;
  mask-image: ${({ $fade }) => ($fade ? "linear-gradient(90deg, #000 90%, rgba(0, 0, 0, 0.2))" : "none")};
`;

const SkIcon = styled.div`
  width: 16px;
  height: 16px;
  border-radius: 3px;
  background: #fff;
  color: #c22a36;
  font: bold 12px/15px "Liberation Sans", sans-serif;
  text-align: center;
  letter-spacing: -0.5px;

  i {
    color: #45308a;
    font-style: normal;
  }
`;

const TvIcon = styled.div`
  width: 16px;
  height: 16px;
  display: flex;
  align-items: center;
  justify-content: center;
  border-radius: 3px;
  background: #111;
`;

const NewTab = styled.div`
  height: 25px;
  margin-left: 12px;
  color: #6f949c;
`;

const WindowButtons = styled.div`
  height: 26px;
  display: flex;
  gap: 34px;
  margin-left: auto;
  padding-right: 17px;
  color: #5c858e;
`;

const NavBar = styled.div`
  height: 47px;
  flex: none;
  display: flex;
  align-items: center;
  padding-left: 4px;
  border-bottom: 1px solid #b9b9b9;
  background: linear-gradient(#fff, #fff);
`;

const NavIcon = styled.div<{ $dim?: boolean }>`
  width: 36px;
  display: flex;
  justify-content: center;
  color: ${({ $dim }) => ($dim ? "#a6a6a6" : "#333")};
`;

const AddressBar = styled.div`
  width: 3109px;
  height: 34px;
  margin-left: 8px;
  flex: none;
  display: flex;
  align-items: center;
  padding: 0 14px 0 5px;
  border-radius: 17px;
  background: #e0e0e0;
  color: #4a4d50;
`;

const SiteInfo = styled.div`
  width: 24px;
  height: 24px;
  display: flex;
  align-items: center;
  justify-content: center;
  border-radius: 50%;
  background: #fff;
`;

const Url = styled.div`
  flex: 1;
  margin-left: 8px;
  color: #222;
  font-size: 14px;

  & > span:last-child {
    color: #666;
  }

  & + svg {
    margin-right: 15px;
  }
`;

const Extensions = styled.div`
  display: flex;
  align-items: center;
  padding-left: 9px;
  color: #333;
`;

const CodeExt = styled.div`
  width: 16px;
  height: 16px;
  background: #a9a9ae;
  color: #fff;
  font-size: 8px;
  font-weight: bold;
  line-height: 15px;
  text-align: center;
`;

const ExtDivider = styled.div`
  width: 2px;
  height: 16px;
  background: #b5e7f0;
`;

const Profile = styled.div`
  width: 20px;
  height: 20px;
  border-radius: 50%;
  background: #748a96;
  color: #fff;
  font-size: 10px;
  line-height: 20px;
  text-align: center;
`;

const TopBar = styled.div`
  height: 38px;
  flex: none;
  display: flex;
  align-items: center;
  padding-right: 5px;
  background: #0f0f0f;
  color: #dbdbdb;
  font-size: 14px;
`;

const Cell = styled.div<{ $w: number; $dim?: boolean; $color?: string }>`
  width: ${({ $w }) => $w}px;
  flex: none;
  display: flex;
  align-items: center;
  justify-content: center;
  opacity: ${({ $dim }) => ($dim ? 0.4 : 1)};
  color: ${({ $color }) => $color || "inherit"};
`;

const Label = styled.div<{ $w: number; $shift?: number; $bold?: boolean }>`
  width: ${({ $w }) => $w}px;
  flex: none;
  padding-left: ${({ $shift }) => ($shift && $shift > 0 ? $shift : 0)}px;
  text-indent: ${({ $shift }) => ($shift && $shift < 0 ? $shift : 0)}px;
  font-weight: ${({ $bold }) => ($bold ? 700 : 500)};

  & > span {
    text-indent: 0;
  }
`;

const Interval = styled(Label).attrs({ $w: 23, $shift: 4 })<{ $active?: boolean }>`
  height: 34px;
  margin-right: 2px;
  border-radius: 4px;
  background: ${({ $active }) => ($active ? "#3d3d3d" : "transparent")};
  line-height: 33px;
`;

const Divider = styled.div`
  width: 1px;
  height: 22px;
  flex: none;
  background: #4a4a4a;
`;

const Avatar = styled.div`
  position: relative;
  width: 28px;
  height: 28px;
  border-radius: 50%;
  background: #a05a9f;
  color: #fff;
  font-size: 18px;
  line-height: 27px;
  text-align: center;
`;

const Badge = styled.span`
  position: absolute;
  left: 20px;
  top: -4px;
  width: 17px;
  height: 17px;
  border-radius: 50%;
  background: #f0384a;
  font-size: 10px;
  line-height: 16px;
`;

const Publish = styled.div`
  width: 69px;
  height: 28px;
  flex: none;
  border-radius: 14px;
  background: #f0f0f0;
  color: #0f0f0f;
  font-weight: 500;
  line-height: 27px;
  text-align: center;
`;

const Workspace = styled.div`
  position: relative;
  height: 1267px;
  flex: none;
  display: flex;
  gap: 4px;
  padding-top: 4px;
  background: #2e2e2e;
`;

const SideBar = styled.div`
  width: 52px;
  display: flex;
  flex-direction: column;
  align-items: center;
  padding-top: 6px;
  border-radius: 0 4px 0 0;
  background: #0f0f0f;
  color: #d0d0d0;
`;

const Tool = styled.div<{ $active?: boolean }>`
  width: 34px;
  height: 34px;
  margin: 2px 0;
  flex: none;
  display: flex;
  align-items: center;
  justify-content: center;
  border-radius: 5px;
  background: ${({ $active }) => ($active ? "#3d3d3d" : "transparent")};
`;

const ToolLine = styled.div`
  width: 36px;
  height: 1px;
  margin: 6px 0;
  background: #4a4a4a;
`;

const RightBar = styled(SideBar)`
  width: 45px;
  padding-top: 1px;
  border-radius: 4px 0 0 0;
`;

const Widget = styled.div`
  height: 46px;
  flex: none;
  display: flex;
  align-items: center;
`;

const WidgetLine = styled(ToolLine)`
  width: 33px;
  margin: 5px 0;
`;

const AppsButton = styled.div`
  width: 34px;
  height: 34px;
  display: grid;
  grid-template-columns: repeat(3, 4px);
  gap: 3px;
  align-content: center;
  justify-content: center;
  border-radius: 50%;
  background: #f0f0f0;

  i {
    height: 4px;
    border-radius: 1px;
    background: #0f0f0f;
  }
`;

const Center = styled.div`
  width: 3335px;
  flex: none;
  display: flex;
  flex-direction: column;
`;

const ChartArea = styled.div`
  height: 1182px;
  flex: none;
  overflow: hidden;
  border-radius: 4px 4px 0 0;
  background: #fff;
`;

const ChartRow = styled.div`
  height: 1154px;
  display: flex;
`;

const Pane = styled.div`
  position: relative;
  width: 3269px;
  overflow: hidden;
`;

const PlotSvg = styled.svg`
  position: absolute;
  left: 0;
  top: 0;
  width: 3269px;
  height: 1154px;
`;

const LegendBox = styled.div`
  position: relative;
  padding: 5px 0 0 7px;
  color: #222;
`;

const LegendRow = styled.div`
  width: 343px;
  height: 23px;
  display: flex;
  align-items: center;
  padding-bottom: 1px;
  background: rgba(255, 255, 255, 0.5);
`;

const Pair = styled.div`
  position: relative;
  width: 24px;
  height: 19px;
  flex: none;

  svg {
    position: absolute;
    left: 9px;
    top: 1px;
  }

  svg + svg {
    left: 2px;
    top: 6px;
  }
`;

const SymbolName = styled.div`
  width: 227px;
  flex: none;
  font-size: 15.5px;
`;

const StatusDot = styled.div`
  width: 8px;
  height: 8px;
  flex: none;
  border-radius: 50%;
  background: #089981;
  box-shadow: 0 0 0 4px rgba(190, 232, 224, 0.8);
`;

const Ohlc = styled.div`
  display: flex;
  gap: 5px;
  margin-left: 21px;
  font-size: 13px;
`;

const OrderRow = styled.div`
  width: 172px;
  height: 42px;
  display: flex;
  align-items: center;
  padding: 0 0 0 1px;
  background: rgba(255, 255, 255, 0.5);
`;

const OrderButton = styled.div<{ $color: string }>`
  width: 67px;
  height: 34px;
  display: flex;
  flex-direction: column;
  align-items: center;
  justify-content: center;
  border: 1px solid ${({ $color }) => $color};
  border-radius: 6px;
  background: #fff;
  color: ${({ $color }) => $color};
  font-size: 12px;
  line-height: 14px;

  b {
    display: flex;
    height: 15px;
    font-size: 13px;
    font-weight: 500;
  }

  sup {
    font-size: 9px;
    line-height: 11px;
  }
`;

const Lot = styled.div`
  width: 31px;
  font-size: 11px;
  text-align: center;
`;

const Collapse = styled.div`
  width: 30px;
  height: 19px;
  margin-top: 4px;
  display: flex;
  align-items: center;
  gap: 5px;
  padding-left: 4px;
  border-radius: 2px;
  background: rgba(255, 255, 255, 0.92);
  font-size: 12px;
`;

const Note = styled.div<{ $x: number; $y: number }>`
  position: absolute;
  left: ${({ $x }) => $x - 56}px;
  top: ${({ $y }) => $y - 129}px;
  display: flex;
  flex-direction: column;
  align-items: flex-start;
  color: #000;
  font-size: 40px;
  font-style: italic;
  font-weight: 400;
  line-height: 40px;
  -webkit-text-stroke: 0.4px #000;
`;

const SelectedNote = styled(Note).attrs({ $x: 1615, $y: 549 })`
  width: 336px;
  height: 57px;
  justify-content: center;
  padding: 0 0 4px 8px;
  border: 2px solid #3f63b8;
`;

const LineNote = styled.div<{ $right: number; $y: number }>`
  position: absolute;
  right: ${({ $right }) => 3325 - $right}px;
  top: ${({ $y }) => $y - 129}px;
  font-size: 14px;
  font-style: italic;
  line-height: 20px;
`;

const LogoMark = styled.div`
  position: absolute;
  left: 6px;
  top: 1119px;
  width: 43px;
  height: 34px;
  padding: 6px;
  background: #fff;
`;

const Bolt = styled.div`
  position: absolute;
  left: 55px;
  top: 1130px;
  color: #8f35a8;
`;

const Event = styled.div<{ $x: number }>`
  position: absolute;
  left: ${({ $x }) => $x - 67}px;
  top: 1130px;
  width: 22px;
  height: 22px;
  display: flex;
  align-items: center;
  justify-content: center;
  border: 1.5px solid #e0526a;
  border-radius: 50%;
  background: #fff;
`;

const ZoomButtons = styled.div`
  position: absolute;
  left: 1565px;
  top: 1098px;
  display: flex;
  gap: 8px;
`;

const ZoomButton = styled.div<{ $gap?: boolean }>`
  width: 24px;
  height: 24px;
  margin-left: ${({ $gap }) => ($gap ? 8 : 0)}px;
  display: flex;
  align-items: center;
  justify-content: center;
  border-radius: 4px;
  background: #2e2e2e;
  box-shadow: 0 2px 4px rgba(0, 0, 0, 0.3);
  color: #e6e6e6;
`;

const PlusBox = styled.div`
  position: absolute;
  right: 0;
  top: 0;
  width: 21px;
  height: 19px;
  display: flex;
  align-items: center;
  justify-content: center;
  background: #12121e;
  color: #fff;
`;

const SymbolTag = styled.div`
  position: absolute;
  right: 0;
  top: 234px;
  width: 51px;
  height: 17px;
  border-radius: 2px 0 0 2px;
  background: #42404b;
  color: #fff;
  font-size: 12px;
  font-weight: 600;
  line-height: 17px;
  text-align: center;
`;

const Axis = styled.div`
  position: relative;
  width: 66px;
  border-left: 1px solid #e0e0e0;
  color: #1c1c1c;
  font-size: 12px;
`;

const Currency = styled.div`
  width: 60px;
  height: 25.6px;
  margin-top: 4px;
  display: flex;
  align-items: center;
  justify-content: space-between;
  padding: 0 3px 0 6px;
  border: 1px solid #ececec;
  border-left: 0;
  border-radius: 2px;
`;

const Price = styled.div`
  height: 40.148px;
  padding-left: 8px;
  line-height: 40px;
`;

const PriceTag = styled.div<{ $y: number; $bg: string; $w?: number; $h?: number; $light?: boolean }>`
  position: absolute;
  left: 0;
  top: ${({ $y }) => $y - 129}px;
  width: ${({ $w }) => $w || 56}px;
  height: ${({ $h }) => $h || 17}px;
  padding-left: 8px;
  border-radius: 0 2px 2px 0;
  background: ${({ $bg }) => $bg};
  color: ${({ $light }) => ($light ? "#fff" : "#131722")};
  font-weight: ${({ $light }) => ($light ? 600 : 400)};
  line-height: 17px;
`;

const Countdown = styled.div`
  color: #bdbcc4;
  font-weight: 500;
  line-height: 12px;
`;

const TimeRow = styled.div`
  height: 28px;
  display: flex;
  color: #1c1c1c;
  font-size: 12px;
`;

const TimeTicks = styled.div`
  position: relative;
  width: 3270px;
  display: flex;
  border-top: 1px solid #dcdcdc;
  border-right: 1px solid #e0e0e0;
`;

const Tick = styled.div<{ $gap: number; $bold: boolean }>`
  width: 0;
  margin-left: ${({ $gap }) => $gap}px;
  flex: none;
  display: flex;
  justify-content: center;
  font-weight: ${({ $bold }) => ($bold ? 500 : 400)};
  letter-spacing: -0.5px;
  line-height: 27px;
  white-space: nowrap;
`;

const TimeTag = styled.div<{ $x: number; $w: number; $bg: string }>`
  position: absolute;
  left: ${({ $x }) => $x - 56}px;
  top: -1px;
  width: ${({ $w }) => $w}px;
  height: 24px;
  padding-left: 8px;
  border-radius: 0 0 2px 2px;
  background: ${({ $bg }) => $bg};
  color: #fff;
  font-weight: 600;
  line-height: 28px;
`;

const AxisSettings = styled.div`
  flex: 1;
  display: flex;
  align-items: center;
  justify-content: center;
  border-top: 1px solid #dcdcdc;
`;

const RangeBar = styled.div`
  height: 39px;
  flex: none;
  display: flex;
  align-items: center;
  padding: 0 10px 0 14px;
  border-radius: 0 0 4px 4px;
  background: #0f0f0f;
  color: #d0d0d0;
  font-size: 14px;
`;

const Range = styled.div<{ $w: number }>`
  width: ${({ $w }) => $w}px;
`;

const PanelTabs = styled(RangeBar)`
  height: 38px;
  gap: 32px;
  margin-top: 4px;
  padding: 0 10px 0 16px;
  border-radius: 4px 4px 0 0;

  svg + svg {
    margin-left: -16px;
  }
`;

const FloatBar = styled.div`
  position: absolute;
  left: 1257px;
  top: -11px;
  width: 328px;
  height: 38px;
  display: flex;
  align-items: center;
  border-radius: 4px;
  background: #1f1f1f;
  box-shadow: 0 2px 4px rgba(0, 0, 0, 0.4);
  color: #dbdbdb;
`;

const ColorCell = styled.div`
  width: 41px;
  display: flex;
  flex-direction: column;
  align-items: center;
  gap: 3px;
`;

const Swatch = styled.div`
  width: 21px;
  height: 4px;
  background: #000;
`;

const SizeValue = styled.span`
  font-size: 13px;
  font-weight: 600;
  letter-spacing: -0.8px;
`;

const TaskRow = styled.div`
  height: 48px;
  flex: none;
  display: flex;
  align-items: center;
  border-top: 1px solid #444;
  background: #202020;
  color: #fff;
  font-size: 12px;
`;

const WidgetsIcon = styled.div`
  width: 1257px;
  padding-left: 20px;
`;

const TaskCell = styled.div<{
  $running?: boolean;
  $alert?: boolean;
  $stacked?: boolean;
  $current?: boolean;
}>`
  position: relative;
  width: 40px;
  height: 40px;
  margin: 0 2px;
  flex: none;
  display: flex;
  align-items: center;
  justify-content: center;
  border-radius: 4px;
  background: ${({ $alert }) => ($alert ? "#87454d" : "transparent")};
  box-shadow: ${({ $stacked }) => ($stacked ? "inset -4px 0 0 #74404a, inset -5px 0 0 #4e2c31" : "none")};

  &::after {
    content: "";
    position: absolute;
    bottom: 0;
    left: ${({ $current }) => ($current ? 12 : 17)}px;
    width: ${({ $current }) => ($current ? 16 : 6)}px;
    height: 3px;
    border-radius: 2px;
    background: ${({ $running, $alert, $current }) =>
      !$running ? "transparent" : $current ? "#1c86d8" : $alert ? "#f5b0b8" : "#9a9a9a"};
  }
`;

const SearchBox = styled.div`
  width: 218px;
  height: 30px;
  margin: 0 3px;
  flex: none;
  display: flex;
  align-items: center;
  justify-content: space-between;
  padding: 0 2px 0 10px;
  border-radius: 15px;
  background: #f3f3f3;
  color: #5a5a5a;
  font-size: 14px;

  svg:first-child {
    color: #222;
  }

  span {
    margin-right: 18px;
  }
`;

const ProfileDot = styled.div`
  position: absolute;
  right: 4px;
  top: 3px;
  width: 15px;
  height: 15px;
  border-radius: 50%;
  background: #78909c;
  color: #cfd8dc;
  font-size: 8px;
  line-height: 15px;
  text-align: center;
`;

const CountDot = styled.div<{ $square?: boolean }>`
  position: absolute;
  right: ${({ $square }) => ($square ? 3 : 4)}px;
  top: ${({ $square }) => ($square ? 8 : 4)}px;
  height: ${({ $square }) => ($square ? 11 : 14)}px;
  padding: 0 1px;
  border-radius: ${({ $square }) => ($square ? 2 : 7)}px;
  background: #e04848;
  color: #fff;
  font-size: 10px;
  line-height: ${({ $square }) => ($square ? 10 : 13)}px;
`;

const ZoomApp = styled.div`
  width: 24px;
  height: 24px;
  border-radius: 50%;
  background: #1a56e8;
  font-size: 12px;
  font-weight: 700;
  line-height: 21px;
  text-align: center;
  letter-spacing: -0.5px;
`;

const Tray = styled.div`
  display: flex;
  align-items: center;
  padding-right: 12px;
`;

const TrayText = styled.div<{ $w: number }>`
  width: ${({ $w }) => $w}px;
  display: flex;
  flex-direction: column;
  align-items: center;
  line-height: 16px;
`;

const TrayClock = styled.div`
  width: 72px;
  display: flex;
  flex-direction: column;
  align-items: flex-end;
  line-height: 16px;
`;
